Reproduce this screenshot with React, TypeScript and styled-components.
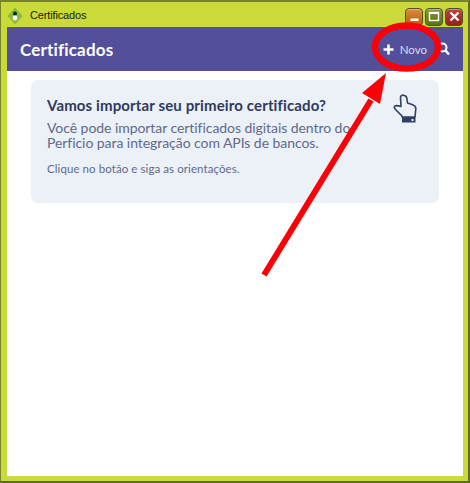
import React from "react";
import styled, { createGlobalStyle } from "styled-components";

const Global = createGlobalStyle`
  html, body { margin: 0; padding: 0; background: #c8d93a; }
  * { box-sizing: border-box; }
`;

const Frame = styled.div`
  position: relative;
  width: 470px;
  height: 483px;
  background: #c9da39;
  border-top: 2px solid #76852c;
  border-left: 1px solid #76852c;
  border-right: 2px solid #5d6b2a;
  border-bottom: 2px solid #5d6b2a;
  padding: 0 5px 5px 6px;
  display: flex;
  flex-direction: column;
  font-family: "Lato", "Liberation Sans", sans-serif;
`;

const TitleBar = styled.div`
  height: 25px;
  flex: none;
  display: flex;
  align-items: center;
  font-family: "Liberation Sans", sans-serif;
  font-size: 11px;
  letter-spacing: -0.15px;
  color: #1a1a0a;
`;

const AppIcon = styled.svg`
  width: 16px;
  height: 18px;
  margin: 2px 7px 0 0;
  flex: none;
`;

const TitleText = styled.span`
  flex: 1;
`;

const WinButtons = styled.div`
  display: flex;
  gap: 2px;
  margin-top: 4px;
`;

const WinButton = styled.div<{ $from: string; $to: string }>`
  width: 18px;
  height: 18px;
  border-radius: 4px;
  background: linear-gradient(${(p) => p.$from}, ${(p) => p.$to});
  border: 1px solid #4f4f2a;
  box-shadow: inset 0 1px 1px rgba(255, 255, 255, 0.4);
  display: flex;
  align-items: center;
  justify-content: center;
`;

const Content = styled.div`
  flex: 1;
  background: #fff;
  display: flex;
  flex-direction: column;
`;

const Header = styled.header`
  height: 44px;
  flex: none;
  background: #534f9b;
  display: flex;
  align-items: center;
  padding: 0 13px;
  color: #fff;
`;

const HeaderTitle = styled.h1`
  flex: 1;
  margin: 0;
  font-size: 17px;
  letter-spacing: 0.17px;
  font-weight: 700;
`;

const NewButton = styled.div`
  display: flex;
  align-items: center;
  gap: 6px;
  font-size: 11.5px;
  color: #dcdcf0;
  margin-right: 10px;
`;

const Card = styled.section`
  margin: 9px 24px 0;
  height: 123px;
  padding: 15px 16px;
  background: #ecf0f7;
  border-radius: 7px;
  position: relative;
`;

const CardTitle = styled.h2`
  margin: 0 0 5px;
  font-size: 15px;
  letter-spacing: 0.13px;
  font-weight: 700;
  line-height: 20px;
  color: #2f3a5c;
`;

const CardText = styled.p`
  margin: 0 0 11px;
  max-width: 320px;
  font-size: 14px;
  letter-spacing: -0.06px;
  line-height: 15px;
  color: #5e6a8c;
`;

const CardHint = styled.p`
  margin: 0;
  font-size: 11.5px;
  letter-spacing: 0.08px;
  line-height: 15px;
  color: #5e6a8c;
`;

const HandIcon = styled.svg`
  position: absolute;
  top: 14px;
  right: 22px;
  width: 24px;
  height: 29px;
`;

const Annotation = styled.svg`
  position: absolute;
  left: -1px;
  top: -2px;
  width: 470px;
  height: 483px;
  pointer-events: none;
`;

export default function App() {
  return (
    <>
      <Global />
      <Frame>
        <TitleBar>
          <AppIcon viewBox="0 0 16 18">
            <path d="M8 0.5 15.5 9 8 17.5 0.5 9Z" fill="#86bb3c" />
            <circle cx="8" cy="6.5" r="2" fill="#15202e" />
            <circle cx="8" cy="11" r="2.4" fill="#fff" />
          </AppIcon>
          <TitleText>Certificados</TitleText>
          <WinButtons>
            <WinButton $from="#d98a34" $to="#b9600f">
              <svg width="11" height="11" viewBox="0 0 11 11"><rect x="1.5" y="7.5" width="8" height="2.5" fill="#fff" /></svg>
            </WinButton>
            <WinButton $from="#83973a" $to="#5f7210">
              <svg width="12" height="11" viewBox="0 0 12 11"><rect x="1.5" y="1.5" width="9" height="8" fill="none" stroke="#fff" strokeWidth="1.4" /><rect x="1" y="1" width="10" height="2" fill="#fff" /></svg>
            </WinButton>
            <WinButton $from="#b8443c" $to="#95201a">
              <svg width="11" height="11" viewBox="0 0 11 11"><path d="M1.5 1.5 9.5 9.5M9.5 1.5 1.5 9.5" stroke="#fff" strokeWidth="2.4" /></svg>
            </WinButton>
          </WinButtons>
        </TitleBar>
        <Content>
          <Header>
            <HeaderTitle>Certificados</HeaderTitle>
            <NewButton>
              <svg width="11" height="11" viewBox="0 0 11 11"><path d="M5.5 0.5v10M0.5 5.5h10" stroke="#fff" strokeWidth="2.6" /></svg>
              Novo
            </NewButton>
            <svg width="13" height="14" viewBox="0 0 13 14"><circle cx="5.5" cy="5.5" r="4" fill="none" stroke="#fff" strokeWidth="2" /><path d="M8.5 8.5 12 12.5" stroke="#fff" strokeWidth="2.4" /></svg>
          </Header>
          <Card>
            <CardTitle>Vamos importar seu primeiro certificado?</CardTitle>
            <CardText>
              Você pode importar certificados digitais dentro do Perficio para integração com APIs de bancos.
            </CardText>
            <CardHint>Clique no botão e siga as orientações.</CardHint>
            <HandIcon viewBox="0 0 24 29">
              <path d="M7.5 3.5C7.5 1.8 9 1 10.5 1.2 12.5 1.5 13.5 2.5 13.8 4L14.5 9 19 10.5C21.5 11.3 23 13 22.8 15L22 23H9V22L2.5 15.5C1 14 1 12.5 2 12 3.5 11 5 11.5 8 12.5Z" fill="none" stroke="#2f3f66" strokeWidth="1.6" strokeLinejoin="round" />
              <rect x="9" y="23" width="13.5" height="5.5" rx="0.6" fill="#2f3f66" />
              <rect x="18.5" y="25" width="2" height="2" fill="#ecf0f7" />
            </HandIcon>
          </Card>
        </Content>
        <Annotation viewBox="0 0 470 483">
          <ellipse cx="406.5" cy="47" rx="31.5" ry="21.5" fill="none" stroke="#fb0007" strokeWidth="6.5" />
          <path d="M264 275 L371 100" stroke="#fb0007" strokeWidth="6" fill="none" />
          <path d="M386 73 L362 93 L380 104Z" fill="#fb0007" />
        </Annotation>
      </Frame>
    </>
  );
}
